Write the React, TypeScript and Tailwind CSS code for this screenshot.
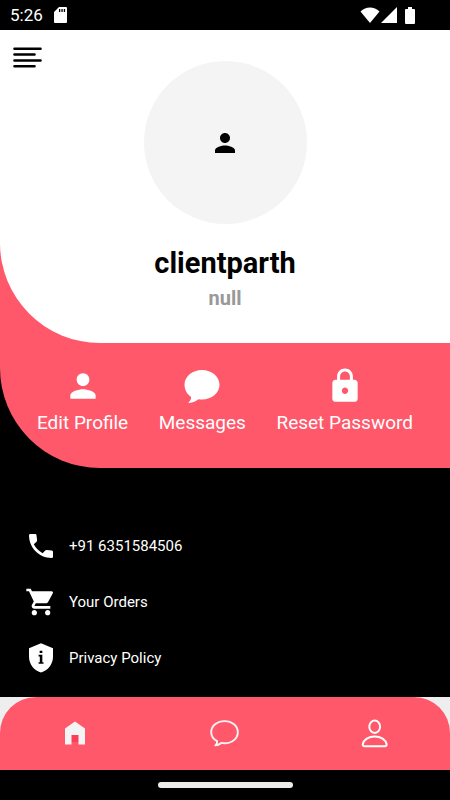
import type { ReactNode } from "react";

const PERSON =
  "M12 12c2.21 0 4-1.79 4-4s-1.79-4-4-4-4 1.79-4 4 1.79 4 4 4zm0 2c-2.67 0-8 1.34-8 4v2h16v-2c0-2.66-5.33-4-8-4z";
const LOCK =
  "M18 8h-1V6c0-2.76-2.24-5-5-5S7 3.24 7 6v2H6c-1.1 0-2 .9-2 2v10c0 1.1.9 2 2 2h12c1.1 0 2-.9 2-2V10c0-1.1-.9-2-2-2zm-6 9c-1.1 0-2-.9-2-2s.9-2 2-2 2 .9 2 2-.9 2-2 2zm3.1-9H8.9V6c0-1.71 1.39-3.1 3.1-3.1 1.71 0 3.1 1.39 3.1 3.1v2z";
const PHONE =
  "M20.1 15.36l-3.7-.43a1.5 1.5 0 0 0-1.25.43l-1.94 2.01a15.05 15.05 0 0 1-6.59-6.59l2.02-1.94a1.5 1.5 0 0 0 .43-1.25L8.64 3.9A1 1 0 0 0 7.65 3H4a1 1 0 0 0-1 1c0 9.39 7.61 17 17 17a1 1 0 0 0 1-1v-3.64a1 1 0 0 0-.9-1z";
const CART =
  "M7 18c-1.1 0-1.99.9-1.99 2S5.9 22 7 22s2-.9 2-2-.9-2-2-2zM1 2v2h2l3.6 7.59-1.35 2.45c-.16.28-.25.61-.25.96 0 1.1.9 2 2 2h12v-2H7.42c-.14 0-.25-.11-.25-.25l.03-.12.9-1.63h7.45c.75 0 1.41-.41 1.75-1.03l3.58-6.49A1 1 0 0 0 20 4H5.21l-.94-2H1zm16 16c-1.1 0-1.99.9-1.99 2s.89 2 1.99 2 2-.9 2-2-.9-2-2-2z";
const SHIELD =
  "M12 1 3 4.6V11c0 5.55 3.84 10.5 9 11.8 5.16-1.3 9-6.25 9-11.8V4.6zM11 6.5v1.8h2V6.5zM10.2 9.6v1.3h.9v4.2h-.9v1.3h3.7v-1.3H13V9.6z";

function Glyph({ d, className }: { d: string; className: string }) {
  return (
    <svg viewBox="0 0 24 24" fill="currentColor" fillRule="evenodd" className={className} aria-hidden="true">
      <path d={d} />
    </svg>
  );
}

function StatusBar() {
  return (
    <div className="flex h-[30px] items-center justify-between bg-black pr-[35px] pl-2.5 text-white">
      <div className="flex items-center gap-[11px]">
        <span className="text-[17px] leading-5">5:26</span>
        <svg viewBox="0 0 13 16" fill="currentColor" className="h-4 w-[13px]" aria-hidden="true">
          <path
            fillRule="evenodd"
            d="M5 0h7a1 1 0 0 1 1 1v14a1 1 0 0 1-1 1H1a1 1 0 0 1-1-1V5zM5 2v3h1.3V2zm2.4 0v3h1.3V2zm2.4 0v3h1.3V2z"
          />
        </svg>
      </div>
      <div className="flex items-center">
        <svg viewBox="0 0 20 16" fill="currentColor" className="h-4 w-5" aria-hidden="true">
          <path d="M.5 4.5C6-1 14-1 19.5 4.5L10 16z" />
        </svg>
        <svg viewBox="0 0 16 16" fill="currentColor" className="ml-px h-4 w-4" aria-hidden="true">
          <path d="M16 0v16H0z" />
        </svg>
        <svg viewBox="0 0 10 17" fill="currentColor" className="ml-2 h-[17px] w-2.5" aria-hidden="true">
          <path d="M3 0h4v2h2a1 1 0 0 1 1 1v13a1 1 0 0 1-1 1H1a1 1 0 0 1-1-1V3a1 1 0 0 1 1-1h2z" />
        </svg>
      </div>
    </div>
  );
}

function Action({ label, children }: { label: string; children: ReactNode }) {
  return (
    <button type="button" className="flex flex-col items-center gap-1">
      {children}
      <span className="text-[19px] leading-7 whitespace-nowrap">{label}</span>
    </button>
  );
}

const links = [
  { label: "+91 6351584506", icon: PHONE, href: "tel:+916351584506" },
  { label: "Your Orders", icon: CART, href: "#orders" },
  { label: "Privacy Policy", icon: SHIELD, href: "#privacy" },
];

export default function App() {
  return (
    <div className="flex min-h-screen flex-col bg-black font-[Roboto,sans-serif] text-white">
      <StatusBar />

      <main className="flex-1">
        <div className="rounded-bl-[100px] bg-[#ff586b]">
          <section className="relative flex flex-col items-center rounded-bl-[100px] bg-white pt-[31px] pb-8">
            <button type="button" aria-label="Open menu" className="absolute top-4 left-3">
              <svg
                viewBox="0 0 31 24"
                fill="none"
                stroke="#000"
                strokeWidth="2.6"
                strokeLinecap="round"
                className="h-6 w-[31px]"
              >
                <path d="M2.5 2.7h26M2.5 8.5h20M2.5 14.5h26M2.5 20.3h20" />
              </svg>
            </button>
            <div className="flex h-[163px] w-[163px] items-center justify-center rounded-full bg-[#f4f4f4]">
              <Glyph d={PERSON} className="h-[30px] w-[30px] text-black" />
            </div>
            <h1 className="mt-[21px] text-[29px] leading-9 font-bold text-black">clientparth</h1>
            <p className="mt-1 text-xl leading-[26px] font-bold text-[#999]">null</p>
          </section>

          <section className="flex justify-between px-[37px] pt-6 pb-[31px]">
            <Action label="Edit Profile">
              <Glyph d={PERSON} className="h-[38px] w-[38px]" />
            </Action>
            <Action label="Messages">
              <svg viewBox="0 0 38 38" fill="currentColor" className="h-[38px] w-[38px]" aria-hidden="true">
                <path d="M19 3C28.7 3 36.5 9.4 36.5 17.8S28.7 32.5 19 32.5c-1.5 0-2.5-.1-3.5-.3-2.5 1.8-5.5 3.5-9.3 3.9-.6 0-.8-.5-.4-.9 1.5-1.5 2.5-3.2 2.3-5.2C4 27.2 1.5 22.8 1.5 17.8 1.5 9.4 9.3 3 19 3z" />
              </svg>
            </Action>
            <Action label="Reset Password">
              <Glyph d={LOCK} className="h-[38px] w-[38px]" />
            </Action>
          </section>
        </div>

        <nav className="mt-[62px] flex flex-col gap-6 pb-[23px] pl-[25px]" aria-label="Account">
          {links.map((link) => (
            <a key={link.label} href={link.href} className="flex items-center gap-3 text-[15px] leading-5">
              <Glyph d={link.icon} className="h-8 w-8" />
              {link.label}
            </a>
          ))}
        </nav>
      </main>

      <footer className="bg-[#eee]">
        <nav className="grid h-[73px] grid-cols-3 place-items-center rounded-t-[36px] bg-[#ff586b]" aria-label="Main">
          <button type="button" aria-label="Home">
            <svg viewBox="0 0 30 30" className="h-[30px] w-[30px]">
              <path d="M11 13h8v10h-8z" fill="#f94058" />
              <path d="M15 2.5 25 9.5v16h-6.5V16h-7v9.5H5v-16z" fill="#f4f4f4" />
            </svg>
          </button>
          <button type="button" aria-label="Messages">
            <svg
              viewBox="0 0 30 30"
              fill="none"
              stroke="#f4f4f4"
              strokeWidth="1.9"
              strokeLinejoin="round"
              className="h-[30px] w-[30px]"
            >
              <path d="M14.6 2.1C22 2.1 27.8 6.9 27.8 13.2S22 24.3 14.6 24.3c-1 0-2-.1-3-.4-1.9 1.3-3.8 2.4-6.2 2.5 1.3-1.3 2-2.6 1.7-4.2C3.5 20.2 1.2 17 1.2 13.2 1.2 6.9 7 2.1 14.6 2.1z" />
            </svg>
          </button>
          <button type="button" aria-label="Profile">
            <svg
              viewBox="0 0 30 30"
              fill="none"
              stroke="#fff"
              strokeWidth="2"
              strokeLinejoin="round"
              className="h-[30px] w-[30px]"
            >
              <ellipse cx="14.7" cy="7.8" rx="5.4" ry="6.2" />
              <path d="M4.5 27.3c-1.2 0-1.9-.9-1.7-2.1C3.7 20.5 8.6 17.4 14.7 17.4s11 3.1 11.9 7.8c.2 1.2-.5 2.1-1.7 2.1z" />
            </svg>
          </button>
        </nav>
        <div className="flex h-[30px] items-center justify-center bg-black">
          <div className="h-1.5 w-[30%] rounded-full bg-[#ececec]" />
        </div>
      </footer>
    </div>
  );
}
